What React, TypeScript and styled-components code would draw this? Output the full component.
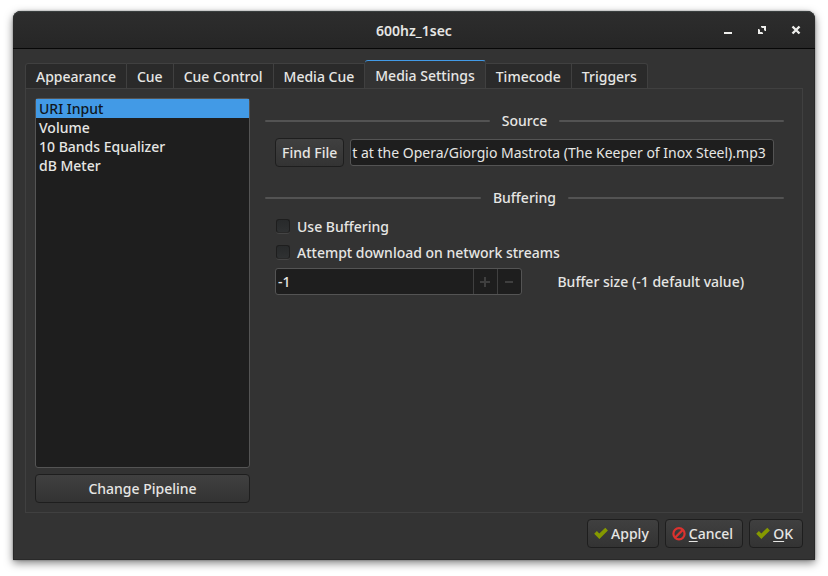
import React, { useEffect, useRef, useState } from "react";
import styled, { createGlobalStyle, css } from "styled-components";

const GlobalStyle = createGlobalStyle`
  *, *::before, *::after { box-sizing: border-box; }
  body { margin: 0; background: #ffffff; }
  body, button, input {
    font-family: "Noto Sans", "Open Sans", sans-serif;
    font-size: 14px;
    font-weight: 500;
    line-height: 19px;
    color: #e6e6e4;
  }
  button, input { margin: 0; }
`;

const Desktop = styled.div`
  display: flex;
  min-height: 100vh;
  padding: 11px 13px 16px;
`;

const Dialog = styled.main`
  flex: 1;
  min-width: 0;
  display: flex;
  flex-direction: column;
  background: #333333;
  border-radius: 8px 8px 0 0;
  box-shadow: 0 3px 9px rgba(0, 0, 0, 0.5), 0 0 2px rgba(0, 0, 0, 0.4),
    inset 0 0 0 1px #292929;
`;

const TitleBar = styled.header`
  display: grid;
  grid-template-columns: 1fr auto 1fr;
  align-items: center;
  height: 38px;
  padding: 0 12px;
  background: linear-gradient(#2d2d2d, #262626);
  border-top: 1px solid #3a3f3f;
  border-bottom: 1px solid #070707;
  border-radius: 8px 8px 0 0;
`;

const Title = styled.h1`
  grid-column: 2;
  margin: 0;
  font-size: 14px;
  font-weight: 600;
`;

const WindowButtons = styled.div`
  display: flex;
  justify-content: flex-end;
  gap: 20px;
`;

const WindowButton = styled.button`
  display: flex;
  padding: 0;
  border: 0;
  background: none;
`;

const Content = styled.div`
  flex: 1;
  display: flex;
  flex-direction: column;
  padding: 11px 12px 12px;
`;

const TabList = styled.div`
  display: flex;
  align-items: flex-end;
`;

const Tab = styled.button<{ $active: boolean }>`
  height: 26px;
  padding: 0 10px;
  margin-bottom: -1px;
  background: #2a2a2a;
  border: 1px solid #404040;
  border-left-width: 0;
  white-space: nowrap;
  &:first-child {
    border-left-width: 1px;
    border-top-left-radius: 3px;
  }
  &:last-child {
    border-top-right-radius: 3px;
  }
  ${(p) =>
    p.$active &&
    css`
      height: 29px;
      padding-top: 2px;
      background: #333333;
      border-top-color: #429ae6;
      border-bottom-color: #333333;
      border-radius: 3px 3px 0 0;
    `}
`;

const Panel = styled.section`
  flex: 1;
  display: flex;
  gap: 15px;
  padding: 9px;
  border: 1px solid #404040;
`;

const Sidebar = styled.div`
  flex: 0 0 215px;
  display: flex;
  flex-direction: column;
  gap: 6px;
`;

const PluginList = styled.ul`
  flex: 1;
  margin: 0;
  padding: 0;
  list-style: none;
  background: #1e1e1e;
  border: 1px solid #545454;
  border-radius: 3px;
`;

const PluginItem = styled.button<{ $selected: boolean }>`
  display: block;
  width: 100%;
  height: 19px;
  padding: 0 3px;
  border: 0;
  text-align: left;
  background: ${(p) => (p.$selected ? "#429ae6" : "transparent")};
  color: ${(p) => (p.$selected ? "#10161c" : "#e6e6e4")};
`;

const PushButton = styled.button`
  display: flex;
  align-items: center;
  justify-content: center;
  gap: 3px;
  height: 29px;
  padding: 0 6px;
  background: linear-gradient(#404040, #333333);
  border: 1px solid #1e1e1e;
  border-radius: 4px;
  white-space: nowrap;
`;

const DialogButton = styled(PushButton)`
  padding-right: 9px;
`;

const Mnemonic = styled.span`
  text-decoration: underline;
  text-underline-offset: 2px;
  text-decoration-thickness: 1px;
`;

const Settings = styled.div`
  flex: 1;
  min-width: 0;
  padding: 13px 9px 0 0;
`;

const Group = styled.section`
  margin-bottom: 21px;
`;

const GroupTitle = styled.h2`
  display: flex;
  align-items: center;
  gap: 12px;
  margin: 0;
  font-size: 14px;
  font-weight: 500;
  &::before,
  &::after {
    content: "";
    flex: 1;
    height: 2px;
    background: #535353;
    border-radius: 1px;
  }
`;

const FileRow = styled.div`
  display: flex;
  align-items: center;
  gap: 6px;
  padding: 8px 10px 0;
`;

const fieldBox = css`
  height: 27px;
  background: #1e1e1e;
  border: 1px solid #545454;
  border-radius: 3px;
`;

const PathInput = styled.input`
  ${fieldBox}
  flex: 1;
  min-width: 0;
  padding: 0 6px 0 1px;
  font-weight: 400;
`;

const BufferingGrid = styled.div`
  display: grid;
  grid-template-columns: 1fr 1fr;
  column-gap: 6px;
  align-items: center;
  padding: 6px 10px 0;
`;

const CheckLabel = styled.label`
  grid-column: 1 / -1;
  display: flex;
  align-items: center;
  gap: 7px;
  height: 26px;
  padding-left: 1px;
`;

const CheckBox = styled.input`
  appearance: none;
  width: 14px;
  height: 14px;
  background: linear-gradient(#282a2b, #2f3132);
  border: 1px solid #1e1e1e;
  border-bottom-color: #292929;
  border-radius: 3px;
  box-shadow: 0 1px 0 #454545;
  &:checked {
    background: #429ae6;
  }
`;

const SpinBox = styled.div`
  ${fieldBox}
  display: flex;
  margin-top: 3px;
  overflow: hidden;
`;

const SpinInput = styled.input`
  flex: 1;
  min-width: 0;
  padding: 0 2px;
  background: none;
  border: 0;
`;

const StepButton = styled.button`
  display: flex;
  align-items: center;
  justify-content: center;
  width: 24px;
  padding: 0;
  background: none;
  border: 0;
  border-left: 1px solid #404040;
`;

const SpinLabel = styled.label`
  margin-top: 3px;
  text-align: center;
`;

const Footer = styled.footer`
  display: flex;
  justify-content: flex-end;
  gap: 6px;
  padding-top: 6px;
`;

const CheckIcon = () => (
  <svg width="14" height="14" viewBox="0 0 14 14" aria-hidden="true">
    <path d="M0.2 6.8 2.9 4.1 5.3 6.5 11.3 0.8 13.9 3.4 5.4 11.9Z" fill="#859900" />
  </svg>
);

const CancelIcon = () => (
  <svg width="14" height="14" viewBox="0 0 14 14" aria-hidden="true">
    <g fill="none" stroke="#dc322f" strokeWidth="2.2">
      <circle cx="7" cy="6.7" r="5.6" />
      <path d="M3.2 10.5 10.8 2.9" />
    </g>
  </svg>
);

const MinimizeIcon = () => (
  <svg width="14" height="14" viewBox="0 0 14 14" aria-hidden="true">
    <path d="M3 9h8v2H3z" fill="#eeeeec" />
  </svg>
);

const MaximizeIcon = () => (
  <svg width="14" height="14" viewBox="0 0 14 14" aria-hidden="true">
    <path d="M6 3h5v5h-1L9 7V5H7L6 4ZM3 6h1l1 1v2h2l1 1v1H3Z" fill="#eeeeec" />
  </svg>
);

const CloseIcon = () => (
  <svg width="14" height="14" viewBox="0 0 14 14" aria-hidden="true">
    <path d="M3.5 3.5 10.5 10.5M10.5 3.5 3.5 10.5" stroke="#eeeeec" strokeWidth="2.4" />
  </svg>
);

const PlusIcon = () => (
  <svg width="10" height="10" viewBox="0 0 10 10" aria-hidden="true">
    <path d="M4 0h2v4h4v2H6v4H4V6H0V4h4z" fill="#3f3f3f" />
  </svg>
);

const MinusIcon = () => (
  <svg width="10" height="10" viewBox="0 0 10 10" aria-hidden="true">
    <path d="M1 4h8v2H1z" fill="#3f3f3f" />
  </svg>
);

const tabs = [
  "Appearance",
  "Cue",
  "Cue Control",
  "Media Cue",
  "Media Settings",
  "Timecode",
  "Triggers",
];

const plugins = ["URI Input", "Volume", "10 Bands Equalizer", "dB Meter"];

export default function App() {
  const [tab, setTab] = useState("Media Settings");
  const [plugin, setPlugin] = useState("URI Input");
  const [size, setSize] = useState(-1);
  const path = useRef<HTMLInputElement>(null);

  // Keep the file name at the end of the path in view.
  useEffect(() => {
    if (path.current) path.current.scrollLeft = path.current.scrollWidth;
  }, []);

  return (
    <>
      <GlobalStyle />
      <Desktop>
        <Dialog>
          <TitleBar>
            <Title>600hz_1sec</Title>
            <WindowButtons>
              <WindowButton aria-label="Minimize"><MinimizeIcon /></WindowButton>
              <WindowButton aria-label="Maximize"><MaximizeIcon /></WindowButton>
              <WindowButton aria-label="Close"><CloseIcon /></WindowButton>
            </WindowButtons>
          </TitleBar>
          <Content>
            <TabList role="tablist">
              {tabs.map((name) => (
                <Tab
                  key={name}
                  role="tab"
                  aria-selected={tab === name}
                  $active={tab === name}
                  onClick={() => setTab(name)}
                >
                  {name}
                </Tab>
              ))}
            </TabList>
            <Panel>
              <Sidebar>
                <PluginList>
                  {plugins.map((name) => (
                    <li key={name}>
                      <PluginItem $selected={plugin === name} onClick={() => setPlugin(name)}>
                        {name}
                      </PluginItem>
                    </li>
                  ))}
                </PluginList>
                <PushButton>Change Pipeline</PushButton>
              </Sidebar>
              <Settings>
                <Group>
                  <GroupTitle>Source</GroupTitle>
                  <FileRow>
                    <PushButton>Find File</PushButton>
                    <PathInput
                      ref={path}
                      aria-label="Source"
                      defaultValue="t at the Opera/Giorgio Mastrota (The Keeper of Inox Steel).mp3"
                    />
                  </FileRow>
                </Group>
                <Group>
                  <GroupTitle>Buffering</GroupTitle>
                  <BufferingGrid>
                    <CheckLabel>
                      <CheckBox type="checkbox" />
                      Use Buffering
                    </CheckLabel>
                    <CheckLabel>
                      <CheckBox type="checkbox" />
                      Attempt download on network streams
                    </CheckLabel>
                    <SpinBox>
                      <SpinInput
                        id="buffer-size"
                        value={size}
                        onChange={(e) => setSize(Number(e.target.value) || 0)}
                      />
                      <StepButton aria-label="Increase" onClick={() => setSize(size + 1)}>
                        <PlusIcon />
                      </StepButton>
                      <StepButton aria-label="Decrease" onClick={() => setSize(Math.max(-1, size - 1))}>
                        <MinusIcon />
                      </StepButton>
                    </SpinBox>
                    <SpinLabel htmlFor="buffer-size">Buffer size (-1 default value)</SpinLabel>
                  </BufferingGrid>
                </Group>
              </Settings>
            </Panel>
            <Footer>
              <DialogButton>
                <CheckIcon />
                <span>Apply</span>
              </DialogButton>
              <DialogButton>
                <CancelIcon />
                <span><Mnemonic>C</Mnemonic>ancel</span>
              </DialogButton>
              <DialogButton>
                <CheckIcon />
                <span><Mnemonic>O</Mnemonic>K</span>
              </DialogButton>
            </Footer>
          </Content>
        </Dialog>
      </Desktop>
    </>
  );
}
